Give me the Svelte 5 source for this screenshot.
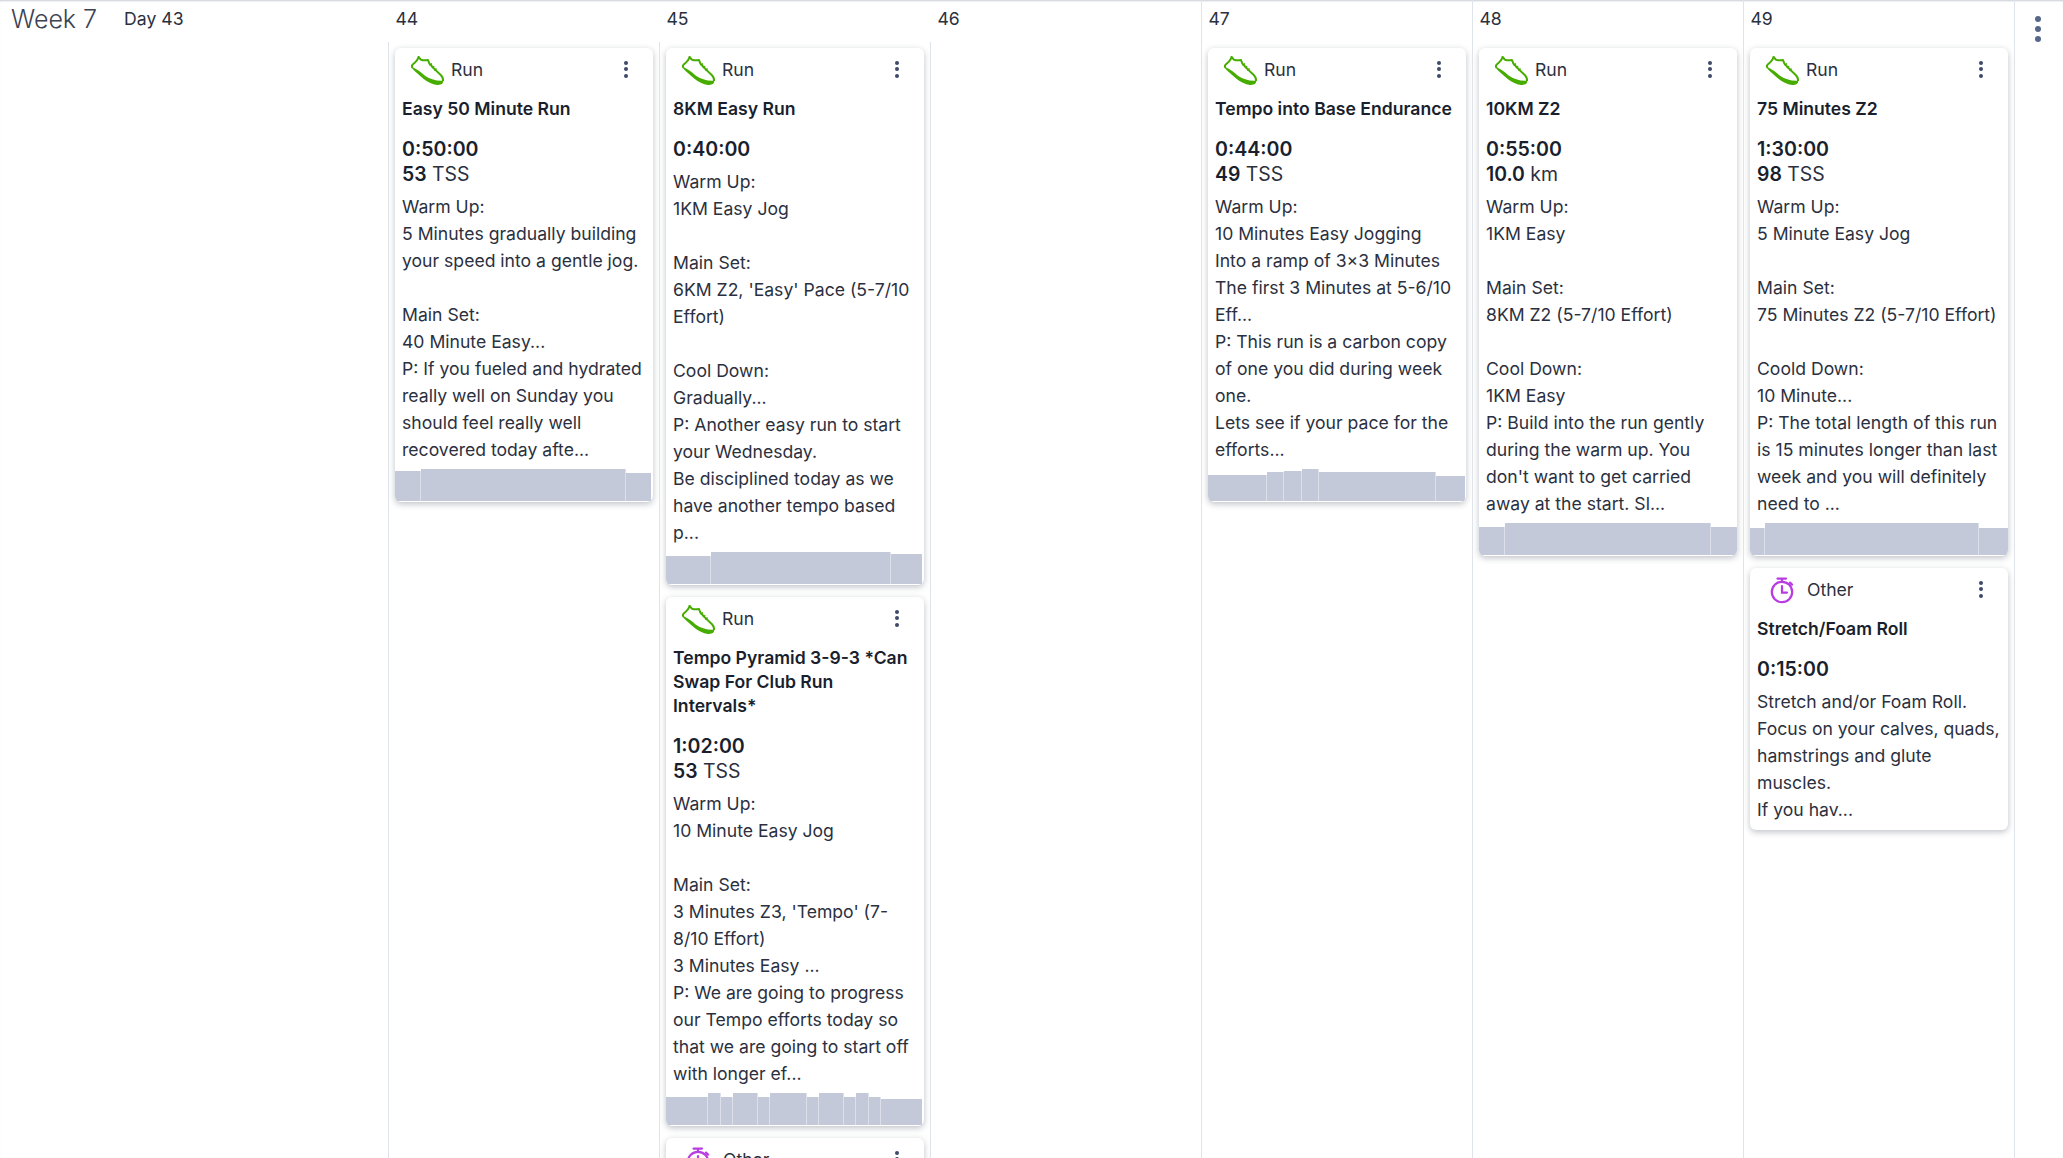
<script>
  const run = 'Run';
  const other = 'Other';
  const days = [
    { n: 44, top: false, cards: [
      { t: run, title: 'Easy 50 Minute Run', time: '0:50:00', v: '53', u: 'TSS',
        d: "Warm Up:\n5 Minutes gradually building your speed into a gentle jog.\n\nMain Set:\n40 Minute Easy...\nP: If you fueled and hydrated really well on Sunday you should feel really well recovered today afte...",
        bars: [[25.5,30],[205.5,32],[25,28]] }
    ]},
    { n: 45, top: false, cards: [
      { t: run, title: '8KM Easy Run', time: '0:40:00',
        d: "Warm Up:\n1KM Easy Jog\n\nMain Set:\n6KM Z2, 'Easy' Pace (5-7/10 Effort)\n\nCool Down:\nGradually...\nP: Another easy run to start your Wednesday.\nBe disciplined today as we have another tempo based p...",
        bars: [[45,28],[180,32],[31,30]] },
      { t: run, title: 'Tempo Pyramid 3-9-3 *Can Swap For Club Run Intervals*', time: '1:02:00', v: '53', u: 'TSS',
        d: "Warm Up:\n10 Minute Easy Jog\n\nMain Set:\n3 Minutes Z3, 'Tempo' (7-8/10 Effort)\n3 Minutes Easy ...\nP: We are going to progress our Tempo efforts today so that we are going to start off with longer ef...",
        bars: [[41.5,28],[13,32],[12,28],[25,32],[12,28],[37,32],[12.5,28],[25,32],[12,28],[12.5,32],[12,28],[41,26]] },
      { t: other, title: 'Stretch/Foam Roll', time: '0:15:00', d: 'Stretch and/or Foam Roll.' }
    ]},
    { n: 46, top: false, cards: [] },
    { n: 47, top: true, cards: [
      { t: run, title: 'Tempo into Base Endurance', time: '0:44:00', v: '49', u: 'TSS',
        d: "Warm Up:\n10 Minutes Easy Jogging\nInto a ramp of 3x3 Minutes\nThe first 3 Minutes at 5-6/10 Eff...\nP: This run is a carbon copy of one you did during week one.\nLets see if your pace for the efforts...",
        bars: [[59,26],[16.5,29],[18,30],[17,32],[117,29],[29,25]] }
    ]},
    { n: 48, top: true, cards: [
      { t: run, title: '10KM Z2', time: '0:55:00', v: '10.0', u: 'km',
        d: "Warm Up:\n1KM Easy\n\nMain Set:\n8KM Z2 (5-7/10 Effort)\n\nCool Down:\n1KM Easy\nP: Build into the run gently during the warm up. You don't want to get carried away at the start. Sl...",
        bars: [[26,28],[206,32],[25.5,28]] }
    ]},
    { n: 49, top: true, cards: [
      { t: run, title: '75 Minutes Z2', time: '1:30:00', v: '98', u: 'TSS',
        d: "Warm Up:\n5 Minute Easy Jog\n\nMain Set:\n75 Minutes Z2 (5-7/10 Effort)\n\nCoold Down:\n10 Minute...\nP: The total length of this run is 15 minutes longer than last week and you will definitely need to ...",
        bars: [[14.5,27],[214.5,32],[28.5,27]] },
      { t: other, title: 'Stretch/Foam Roll', time: '0:15:00',
        d: "Stretch and/or Foam Roll.\nFocus on your calves, quads, hamstrings and glute muscles.\nIf you hav..." }
    ]}
  ];
</script>

{#snippet shoe()}
  <svg class="ico shoe" viewBox="0 0 33 30" aria-hidden="true">
    <path d="M1.6 12 C0.6 10.6 0.8 9.2 2 8.2 C5 6 7 3.5 7.6 0.8 L9.8 3.6 C12 4.6 15 4.4 17 4 L18.4 7.6 C21.4 11 26 15.6 30 19.2 C31.5 20.8 32.2 23 32 25" fill="none" stroke="currentColor" stroke-width="2" stroke-linejoin="round"/>
    <path d="M1 11 C6 13 10 16 13.6 19.4 C18.6 23 25 25 32.2 24.6 C32.8 27.4 30 29.4 26 29 C21 28.4 16.4 26 12.4 22.8 C8 19 4.6 16 1.4 12.8 Z" fill="currentColor"/>
    <path d="M18.6 9.4 L21 7.6 M20.8 12 L23.2 10.2 M23.2 14.4 L25.6 12.6" fill="none" stroke="currentColor" stroke-width="1.4"/>
  </svg>
{/snippet}

{#snippet watch()}
  <svg class="ico watch" viewBox="0 0 24 27" aria-hidden="true">
    <g fill="none" stroke="currentColor" stroke-width="2.2" stroke-linecap="round">
      <circle cx="12" cy="15" r="10.2"/>
      <path d="M7.5 1.6 H16 M12 1.6 V4.6 M20 5.6 L22 7.6 M12 9 V15.6 H17"/>
    </g>
  </svg>
{/snippet}

{#snippet dots(big)}
  <span class="dots" class:big aria-hidden="true"><i></i><i></i><i></i></span>
{/snippet}

<div class="page">
  <div class="week">
    <div class="head">
      <span class="wk">Week 7</span>
      <span class="dn">Day 43</span>
    </div>
  </div>

  {#each days as day}
    <div class="day" class:top={day.top}>
      <div class="num">{day.n}</div>
      <div class="cards">
        {#each day.cards as c}
          <article class="card">
            <header class="row" class:oth={c.t === other}>
              {#if c.t === run}{@render shoe()}{:else}{@render watch()}{/if}
              <span class="lab">{c.t}</span>
              {@render dots(false)}
            </header>
            <h3>{c.title}</h3>
            <div class="time">{c.time}</div>
            {#if c.v}<div class="metric"><b>{c.v}</b> {c.u}</div>{/if}
            <p class="desc">{c.d}</p>
            {#if c.bars}
              <div class="bars">
                {#each c.bars as b}
                  <span style="width:{b[0]}px;height:{b[1]}px"></span>
                {/each}
              </div>
            {/if}
          </article>
        {/each}
      </div>
    </div>
  {/each}

  <div class="day end top">
    {@render dots(true)}
  </div>
</div>

<style>
  :global(html), :global(body) {
    margin: 0;
    height: 100%;
    overflow: hidden;
    background: #fff;
  }
  .page {
    display: grid;
    grid-template-columns: 388px repeat(6, 271px) 49px;
    height: 1158px;
    overflow: hidden;
    font-family: Inter, "Liberation Sans", sans-serif;
    color: #1f2433;
    box-shadow: inset 0 2px 2px -1px #c9cdd6;
  }
  .head {
    display: flex;
    align-items: center;
    height: 37px;
    padding-left: 11px;
    gap: 27px;
  }
  .wk {
    font-size: 25px;
    font-weight: 300;
    color: #3b4252;
  }
  .dn, .num {
    font-size: 17.6px;
    color: #2b3040;
  }
  .num {
    height: 36px;
    line-height: 38px;
    padding-left: 7.5px;
  }
  .day {
    position: relative;
    min-width: 0;
  }
  .day::before {
    content: "";
    position: absolute;
    left: 0;
    top: 42px;
    bottom: 0;
    width: 1px;
    background: #dfe3ea;
  }
  .day.top::before { top: 0; }
  .cards {
    display: flex;
    flex-direction: column;
    gap: 12px;
    padding: 12px 6px 0 7px;
  }
  .card {
    background: #fff;
    border-radius: 6px;
    box-shadow: 0 2px 6px rgba(40, 50, 70, 0.3);
    overflow: hidden;
    padding-bottom: 1px;
  }
  .row {
    display: flex;
    align-items: center;
    height: 49px;
    padding: 0 25px 7px 16px;
    box-sizing: border-box;
  }
  .row.oth { padding-left: 20px; }
  .ico { flex: none; display: block; }
  .shoe {
    width: 33px;
    height: 30px;
    color: #46ad00;
    margin: 4px 7px 0 0;
  }
  .watch {
    width: 24px;
    height: 27px;
    color: #b83ce2;
    margin: 2px 13px 0 0;
  }
  .lab {
    flex: 1;
    font-size: 17.6px;
    color: #2b3040;
  }
  .dots {
    display: flex;
    flex-direction: column;
    gap: 2.5px;
  }
  .dots i {
    width: 4px;
    height: 4px;
    border-radius: 50%;
    background: #3f4a68;
  }
  .dots.big {
    position: absolute;
    left: 21px;
    top: 16px;
    gap: 4px;
  }
  .dots.big i {
    width: 6px;
    height: 6px;
    background: #56678a;
  }
  h3 {
    margin: 0;
    padding: 0 7px;
    font-size: 17.6px;
    line-height: 24px;
    font-weight: 600;
    color: #1a1f2e;
  }
  .time {
    padding: 15px 7px 0;
    font-size: 19.6px;
    line-height: 26px;
    font-weight: 600;
    color: #1a1f2e;
  }
  .metric {
    padding: 0 7px;
    font-size: 19.4px;
    line-height: 25px;
    color: #2b3040;
  }
  .metric b { font-weight: 600; color: #1a1f2e; }
  .desc {
    margin: 5.5px 0 6.5px;
    padding: 0 7px;
    font-size: 17.6px;
    line-height: 27px;
    white-space: pre-line;
    color: #2b3040;
  }
  .bars {
    display: flex;
    align-items: flex-end;
    gap: 0;
    height: 32px;
  }
  .bars span {
    display: block;
    flex: none;
    box-sizing: border-box;
    background: #c3c9d8;
    border-right: 1px solid #dde0e9;
  }
  .bars span:last-child { border-right: 0; }
</style>
